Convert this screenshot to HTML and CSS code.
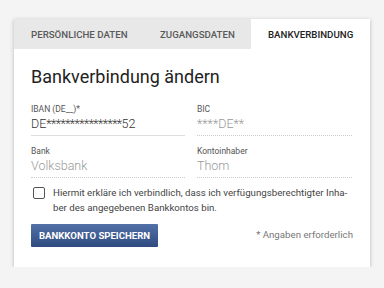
FILE: index.html
```html
<!DOCTYPE html>
<html lang="de">
<head>
    <meta charset="UTF-8">
    <title>Bankverbindung</title>
    <link rel="stylesheet" href="styles.css">
</head>
<body>
    <div class="card">
        <div class="tabs">
            <div class="tab">Persönliche Daten</div>
            <div class="tab">Zugangsdaten</div>
            <div class="tab active">Bankverbindung</div>
        </div>

        <div class="content">
            <h1>Bankverbindung ändern</h1>

            <div class="fields">
                <div class="field">
                    <label>IBAN (DE__)*</label>
                    <div class="value">DE<span class="mask">****************</span>52</div>
                </div>
                <div class="field readonly">
                    <label>BIC</label>
                    <div class="value">****DE**</div>
                </div>
                <div class="field readonly">
                    <label>Bank</label>
                    <div class="value">Volksbank</div>
                </div>
                <div class="field readonly">
                    <label>Kontoinhaber</label>
                    <div class="value">Thom</div>
                </div>
            </div>

            <div class="check">
                <span class="box"></span>
                <p>Hiermit erkläre ich verbindlich, dass ich verfügungsberechtigter Inha&shy;ber des angegebenen Bankkontos bin.</p>
            </div>

            <div class="actions">
                <button>Bankkonto speichern</button>
                <span class="hint">* Angaben erforderlich</span>
            </div>
        </div>
    </div>
</body>
</html>
```

FILE: styles.css
```css
* {
    margin: 0;
    padding: 0;
    box-sizing: border-box;
}

body {
    font-family: Roboto, "Liberation Sans", sans-serif;
    background-color: #f4f4f4;
    color: #333;
    padding: 19px 14px 0;
}

.card {
    width: 356px;
    height: 248px;
    background-color: #fff;
    box-shadow: 0 1px 4px rgba(0, 0, 0, 0.25);
}

.tabs {
    display: flex;
    height: 30px;
    background-color: #e8e8e8;
}

.tab {
    display: flex;
    align-items: center;
    font-size: 9.7px;
    font-weight: 500;
    text-transform: uppercase;
    color: #5a5a5a;
    padding-left: 17px;
}

.tab:nth-child(1) {
    width: 129px;
}

.tab:nth-child(2) {
    width: 108px;
}

.tab.active {
    flex: 1;
    background-color: #fff;
    color: #222;
    padding-left: 17px;
}

.content {
    padding: 16px 17px 0;
}

h1 {
    font-size: 18px;
    font-weight: 400;
    color: #222;
    line-height: 24px;
    margin-bottom: 14px;
}

.fields {
    display: grid;
    grid-template-columns: 154px 155px;
    column-gap: 12px;
    row-gap: 9px;
}

.field label {
    display: block;
    font-size: 8.5px;
    color: #555;
    line-height: 12px;
}

.field .value {
    font-size: 12.5px;
    font-weight: 300;
    color: #333;
    line-height: 18px;
    padding-bottom: 2px;
    border-bottom: 1px solid #ddd;
}

.field .mask {
    letter-spacing: -0.6px;
}

.field.readonly .value {
    color: #999;
    border-bottom: 1px dotted #ccc;
}

.check {
    display: flex;
    gap: 8px;
    margin-top: 7px;
    padding-left: 2px;
}

.check .box {
    flex: none;
    width: 12px;
    height: 12px;
    border: 1.5px solid #555;
    border-radius: 2px;
    margin-top: 2px;
}

.check p {
    font-size: 9.7px;
    line-height: 15px;
    color: #444;
    hyphens: manual;
}

.actions {
    display: flex;
    justify-content: space-between;
    align-items: flex-start;
    margin-top: 9px;
}

button {
    width: 127px;
    height: 23px;
    border: none;
    border-radius: 1px;
    background: linear-gradient(#5271a8, #2f4b80);
    color: #fff;
    font-family: Roboto, "Liberation Sans", sans-serif;
    font-size: 9.6px;
    font-weight: 700;
    text-transform: uppercase;
}

.hint {
    font-size: 9.7px;
    color: #777;
    margin-top: 4px;
    line-height: 13px;
}
```
